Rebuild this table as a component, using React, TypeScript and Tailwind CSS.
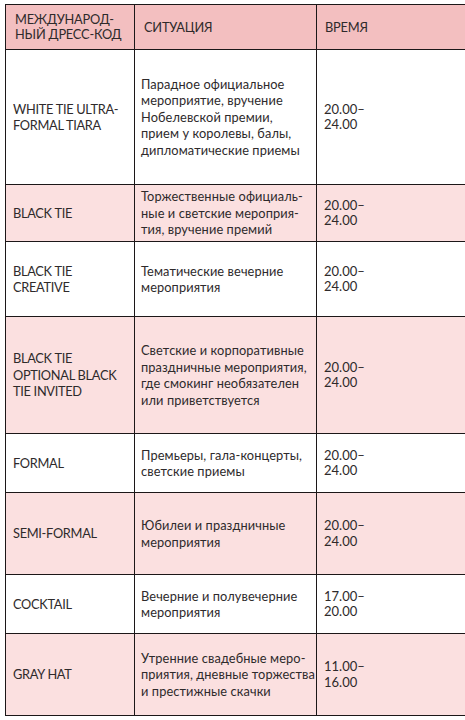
import React from 'react';

type Row = {
    code: string[];
    situation: string[];
    time: string[];
    height: string;
    pink: boolean;
};

const rows: Row[] = [
    {
        code: ['WHITE TIE ULTRA-', 'FORMAL TIARA'],
        situation: ['Парадное официальное', 'мероприятие, вручение', 'Нобелевской премии,', 'прием у королевы, балы,', 'дипломатические приемы'],
        time: ['20.00–', '24.00'],
        height: 'h-[135px]',
        pink: false,
    },
    {
        code: ['BLACK TIE'],
        situation: ['Торжественные официаль-', 'ные и светские мероприя-', 'тия, вручение премий'],
        time: ['20.00–', '24.00'],
        height: 'h-[57px]',
        pink: true,
    },
    {
        code: ['BLACK TIE', 'CREATIVE'],
        situation: ['Тематические вечерние', 'мероприятия'],
        time: ['20.00–', '24.00'],
        height: 'h-[75px]',
        pink: false,
    },
    {
        code: ['BLACK TIE', 'OPTIONAL BLACK', 'TIE INVITED'],
        situation: ['Светские и корпоративные', 'праздничные мероприятия,', 'где смокинг необязателен', 'или приветствуется'],
        time: ['20.00–', '24.00'],
        height: 'h-[117px]',
        pink: true,
    },
    {
        code: ['FORMAL'],
        situation: ['Премьеры, гала-концерты,', 'светские приемы'],
        time: ['20.00–', '24.00'],
        height: 'h-[59px]',
        pink: false,
    },
    {
        code: ['SEMI-FORMAL'],
        situation: ['Юбилеи и праздничные', 'мероприятия'],
        time: ['20.00–', '24.00'],
        height: 'h-[82px]',
        pink: true,
    },
    {
        code: ['COCKTAIL'],
        situation: ['Вечерние и полувечерние', 'мероприятия'],
        time: ['17.00–', '20.00'],
        height: 'h-[59px]',
        pink: false,
    },
    {
        code: ['GRAY HAT'],
        situation: ['Утренние свадебные меро-', 'приятия, дневные торжества', 'и престижные скачки'],
        time: ['11.00–', '16.00'],
        height: 'h-[82px]',
        pink: true,
    },
];

const Lines = ({ lines }: { lines: string[] }) => (
    <div>
        {lines.map((l, i) => (
            <div key={i} className="whitespace-nowrap">{l}</div>
        ))}
    </div>
);

export default function App() {
    return (
        <div className="w-[465px] h-[720px] bg-white overflow-hidden pt-[4px] pl-[5px] text-[#2e2a2b] font-['Lato','Liberation_Sans',sans-serif]">
            <div className="w-[470px] border-t border-l border-[#1c1718]">
                {/* header */}
                <div className="grid grid-cols-[129px_182px_1fr] h-[45px] border-b border-[#1c1718] bg-[#f3bfc0] text-[12.8px] tracking-[-0.2px] leading-[15px]">
                    <div className="flex items-center pl-[9px] border-r border-[#1c1718]">
                        <Lines lines={['МЕЖДУНАРОД-', 'НЫЙ ДРЕСС-КОД']} />
                    </div>
                    <div className="flex items-center pl-[9px] border-r border-[#1c1718]">СИТУАЦИЯ</div>
                    <div className="flex items-center pl-[8px]">ВРЕМЯ</div>
                </div>
                {rows.map((r, i) => (
                    <div
                        key={i}
                        className={`grid grid-cols-[129px_182px_1fr] ${r.height} border-b border-[#1c1718] ${r.pink ? 'bg-[#fbe0e0]' : 'bg-white'}`}
                    >
                        <div className="flex items-center pl-[7px] border-r border-[#1c1718] text-[12.8px] tracking-[-0.3px] leading-[16.5px]">
                            <Lines lines={r.code} />
                        </div>
                        <div className="flex items-center pl-[6px] border-r border-[#1c1718] text-[12.8px] tracking-[0.1px] leading-[16.5px]">
                            <Lines lines={r.situation} />
                        </div>
                        <div className="flex items-center pl-[7px] text-[13px] leading-[15.5px]">
                            <Lines lines={r.time} />
                        </div>
                    </div>
                ))}
            </div>
        </div>
    );
}
